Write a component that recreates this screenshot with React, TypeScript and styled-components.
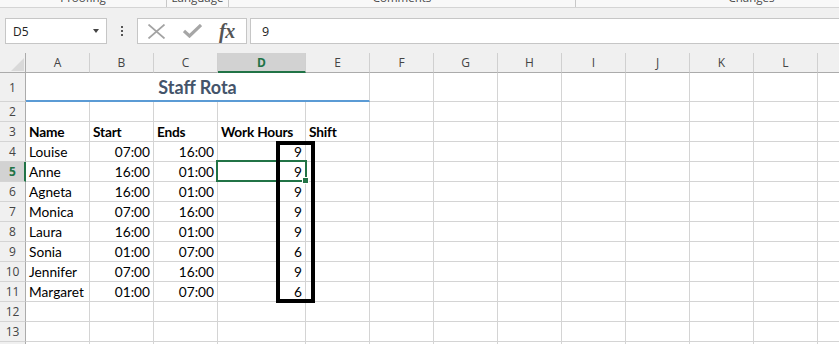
import React from "react";
import styled, { createGlobalStyle } from "styled-components";

const GlobalStyle = createGlobalStyle`
  html, body { margin: 0; padding: 0; background: #ffffff; overflow: hidden; }
`;

const UI_FONT = `"Open Sans", "Noto Sans", "Liberation Sans", sans-serif`;
const CELL_FONT = `Lato, "Liberation Sans", sans-serif`;
const GREEN = "#217346";

const Page = styled.div`
  width: 839px;
  height: 344px;
  overflow: hidden;
  display: flex;
  flex-direction: column;
  background: #ffffff;
`;

const Ribbon = styled.div`
  flex: none;
  height: 7px;
  display: flex;
  background: #f8f8f8;
  border-bottom: 1px solid #d4d4d4;
  overflow: hidden;
`;

const RibbonGroup = styled.div<{ $w: number }>`
  flex: none;
  box-sizing: border-box;
  width: ${(p) => p.$w}px;
  height: 7px;
  border-right: 1px solid #c8c8c8;
  display: flex;
  justify-content: center;
  overflow: hidden;
`;

const GroupLabel = styled.span`
  font-family: ${UI_FONT};
  font-size: 11.5px;
  line-height: 16px;
  height: 16px;
  margin-top: -10px;
  color: #444444;
  white-space: nowrap;
`;

const FormulaBar = styled.div`
  flex: none;
  display: flex;
  align-items: center;
  padding: 10px 0 9px 5px;
  background: #f0f0f0;
`;

const NameBox = styled.div`
  box-sizing: border-box;
  width: 102px;
  height: 26px;
  background: #ffffff;
  border: 1px solid #c6c6c6;
  display: flex;
  align-items: center;
  justify-content: space-between;
  padding: 0 7px 0 7px;
  font-family: ${UI_FONT};
  font-size: 12px;
  color: #222222;
`;

const DropArrow = styled.span`
  width: 0;
  height: 0;
  border-left: 3.5px solid transparent;
  border-right: 3.5px solid transparent;
  border-top: 4px solid #444444;
`;

const DotsCol = styled.div`
  width: 30px;
  display: flex;
  flex-direction: column;
  align-items: center;
  gap: 2px;
`;

const Dot = styled.span`
  width: 2px;
  height: 2px;
  background: #555555;
`;

const FxBox = styled.div`
  box-sizing: border-box;
  width: 110px;
  height: 26px;
  background: #ffffff;
  border: 1px solid #c6c6c6;
  display: flex;
  align-items: center;
  padding-left: 9px;
`;

const IconSlot = styled.span<{ $w: number }>`
  width: ${(p) => p.$w}px;
  display: flex;
  align-items: center;
`;

const FxText = styled.span`
  font-family: "Liberation Serif", "DejaVu Serif", serif;
  font-style: italic;
  font-weight: 700;
  font-size: 20px;
  line-height: 20px;
  color: #555555;
  letter-spacing: -0.5px;
`;

const FormulaInput = styled.div`
  box-sizing: border-box;
  flex: 1;
  height: 26px;
  margin-left: 3px;
  background: #ffffff;
  border-top: 1px solid #c6c6c6;
  border-bottom: 1px solid #c6c6c6;
  border-left: 1px solid #c6c6c6;
  display: flex;
  align-items: center;
  padding-left: 11px;
  font-family: ${UI_FONT};
  font-size: 12.5px;
  color: #222222;
`;

const SheetArea = styled.div`
  flex: 1;
  overflow: hidden;
`;

const Grid = styled.div`
  position: relative;
  display: grid;
  grid-template-columns: 26px 64px 64px 64px 88px repeat(9, 64px);
  grid-template-rows: 20px 29px repeat(13, 20px);
  width: max-content;
`;

const Corner = styled.div`
  position: relative;
  box-sizing: border-box;
  background: #f0f0f0;
  border-right: 1px solid #ababab;
  border-bottom: 1px solid #ababab;
  &::after {
    content: "";
    position: absolute;
    right: 1px;
    bottom: 1px;
    width: 0;
    height: 0;
    border-style: solid;
    border-width: 0 0 13px 13px;
    border-color: transparent transparent #d9d9d9 transparent;
  }
`;

const ColHeader = styled.div<{ $active?: boolean }>`
  box-sizing: border-box;
  background: ${(p) => (p.$active ? "#d2d2d2" : "#f0f0f0")};
  border-right: 1px solid #d0d0d0;
  border-bottom: ${(p) => (p.$active ? `2px solid ${GREEN}` : "1px solid #ababab")};
  display: flex;
  align-items: center;
  justify-content: center;
  font-family: ${UI_FONT};
  font-size: 12px;
  font-weight: ${(p) => (p.$active ? 700 : 400)};
  color: ${(p) => (p.$active ? GREEN : "#444444")};
`;

const RowHeader = styled.div<{ $active?: boolean }>`
  box-sizing: border-box;
  background: ${(p) => (p.$active ? "#d2d2d2" : "#f0f0f0")};
  border-right: ${(p) => (p.$active ? `2px solid ${GREEN}` : "1px solid #ababab")};
  border-bottom: 1px solid #d4d4d4;
  display: flex;
  align-items: center;
  justify-content: center;
  padding-left: ${(p) => (p.$active ? 1 : 0)}px;
  font-family: ${UI_FONT};
  font-size: 12px;
  font-weight: ${(p) => (p.$active ? 700 : 400)};
  color: ${(p) => (p.$active ? GREEN : "#444444")};
`;

const Cell = styled.div<{ $right?: boolean; $bold?: boolean }>`
  box-sizing: border-box;
  border-right: 1px solid #d4d4d4;
  border-bottom: 1px solid #d4d4d4;
  display: flex;
  align-items: flex-end;
  justify-content: ${(p) => (p.$right ? "flex-end" : "flex-start")};
  padding: 0 3px 0 3px;
  font-family: ${CELL_FONT};
  font-size: 13.7px;
  line-height: 19px;
  font-weight: ${(p) => (p.$bold ? 700 : 400)};
  letter-spacing: ${(p) => (p.$bold ? "-0.2px" : "0")};
  color: #000000;
  white-space: nowrap;
`;

const TitleCell = styled.div`
  grid-column: span 5;
  box-sizing: border-box;
  border-right: 1px solid #d4d4d4;
  border-bottom: 2px solid #5b9bd5;
  display: flex;
  align-items: flex-end;
  justify-content: center;
  padding-bottom: 3px;
  font-family: ${CELL_FONT};
  font-size: 18px;
  line-height: 20px;
  font-weight: 700;
  color: #44546a;
`;

const Selection = styled.div`
  position: absolute;
  left: 216px;
  top: 107px;
  width: 91px;
  height: 22px;
  box-sizing: border-box;
  border: 2px solid ${GREEN};
  pointer-events: none;
`;

const FillHandle = styled.div`
  position: absolute;
  left: 303px;
  top: 125px;
  width: 5px;
  height: 5px;
  background: ${GREEN};
  box-shadow: 0 0 0 1px #ffffff;
`;

const ShapeRect = styled.div`
  position: absolute;
  left: 276px;
  top: 88px;
  width: 39px;
  height: 162px;
  box-sizing: border-box;
  border: 4px solid #000000;
  pointer-events: none;
`;

const COLS = ["A", "B", "C", "D", "E", "F", "G", "H", "I", "J", "K", "L", "M"];

type Row = [string, string, string, string];
const DATA: Row[] = [
  ["Louise", "07:00", "16:00", "9"],
  ["Anne", "16:00", "01:00", "9"],
  ["Agneta", "16:00", "01:00", "9"],
  ["Monica", "07:00", "16:00", "9"],
  ["Laura", "16:00", "01:00", "9"],
  ["Sonia", "01:00", "07:00", "6"],
  ["Jennifer", "07:00", "16:00", "9"],
  ["Margaret", "01:00", "07:00", "6"],
];
const HEADINGS = ["Name", "Start", "Ends", "Work Hours", "Shift"];

const XIcon = () => (
  <svg width="19" height="15" viewBox="0 0 19 15">
    <path d="M1.5 0.5 L17.5 14.5 M17.5 0.5 L1.5 14.5" stroke="#a3a3a3" strokeWidth="1.7" fill="none" />
  </svg>
);

const CheckIcon = () => (
  <svg width="19" height="14" viewBox="0 0 19 14">
    <path d="M1 7 L6.5 12 L18 1" stroke="#a6a6a6" strokeWidth="3.2" fill="none" strokeLinejoin="miter" />
  </svg>
);

function emptyCells(from: number, to: number, key: string) {
  const out: React.ReactNode[] = [];
  for (let i = from; i < to; i++) out.push(<Cell key={`${key}-${i}`} />);
  return out;
}

export default function App() {
  const rows: React.ReactNode[] = [];

  // Row 1
  rows.push(<RowHeader key="rh1">1</RowHeader>);
  rows.push(<TitleCell key="title">Staff Rota</TitleCell>);
  rows.push(...emptyCells(5, COLS.length, "r1"));

  // Row 2
  rows.push(<RowHeader key="rh2">2</RowHeader>);
  rows.push(...emptyCells(0, COLS.length, "r2"));

  // Row 3
  rows.push(<RowHeader key="rh3">3</RowHeader>);
  HEADINGS.forEach((h, i) => rows.push(<Cell key={`h-${i}`} $bold>{h}</Cell>));
  rows.push(...emptyCells(5, COLS.length, "r3"));

  // Rows 4-11
  DATA.forEach((d, idx) => {
    const n = idx + 4;
    rows.push(<RowHeader key={`rh${n}`} $active={n === 5}>{n}</RowHeader>);
    rows.push(<Cell key={`r${n}-a`}>{d[0]}</Cell>);
    rows.push(<Cell key={`r${n}-b`} $right>{d[1]}</Cell>);
    rows.push(<Cell key={`r${n}-c`} $right>{d[2]}</Cell>);
    rows.push(<Cell key={`r${n}-d`} $right>{d[3]}</Cell>);
    rows.push(...emptyCells(4, COLS.length, `r${n}`));
  });

  // Rows 12-14
  for (let n = 12; n <= 14; n++) {
    rows.push(<RowHeader key={`rh${n}`}>{n}</RowHeader>);
    rows.push(...emptyCells(0, COLS.length, `r${n}`));
  }

  return (
    <Page>
      <GlobalStyle />
      <Ribbon>
        <RibbonGroup $w={167}><GroupLabel>Proofing</GroupLabel></RibbonGroup>
        <RibbonGroup $w={62}><GroupLabel>Language</GroupLabel></RibbonGroup>
        <RibbonGroup $w={347}><GroupLabel>Comments</GroupLabel></RibbonGroup>
        <RibbonGroup $w={352}><GroupLabel>Changes</GroupLabel></RibbonGroup>
      </Ribbon>
      <FormulaBar>
        <NameBox>
          <span>D5</span>
          <DropArrow />
        </NameBox>
        <DotsCol>
          <Dot />
          <Dot />
          <Dot />
        </DotsCol>
        <FxBox>
          <IconSlot $w={36}><XIcon /></IconSlot>
          <IconSlot $w={36}><CheckIcon /></IconSlot>
          <IconSlot $w={24}><FxText>fx</FxText></IconSlot>
        </FxBox>
        <FormulaInput>9</FormulaInput>
      </FormulaBar>
      <SheetArea>
        <Grid>
          <Corner />
          {COLS.map((c) => (
            <ColHeader key={c} $active={c === "D"}>{c}</ColHeader>
          ))}
          {rows}
          <Selection />
          <FillHandle />
          <ShapeRect />
        </Grid>
      </SheetArea>
    </Page>
  );
}
